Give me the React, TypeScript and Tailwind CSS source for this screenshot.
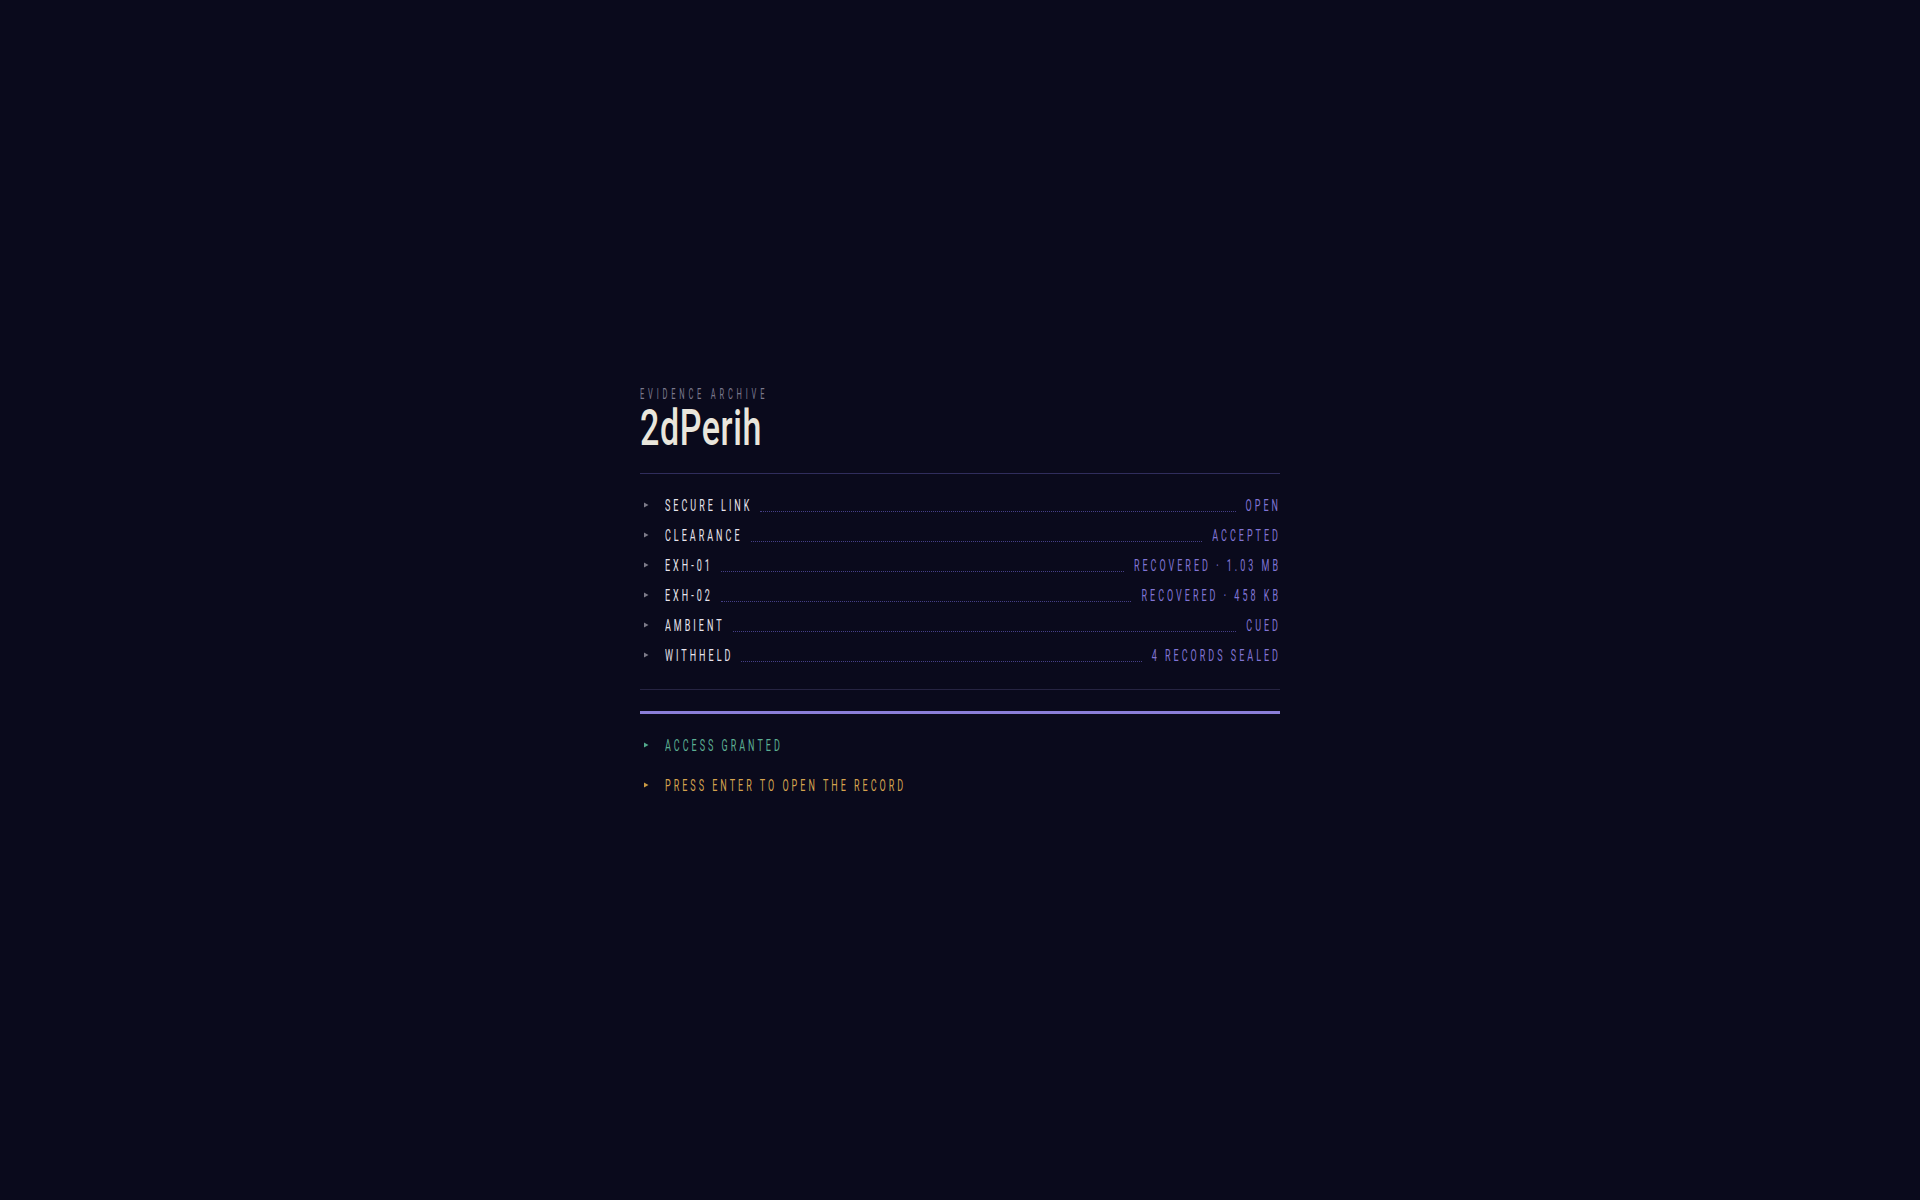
import React from "react";

const rows: [string, string][] = [
  ["SECURE LINK", "OPEN"],
  ["CLEARANCE", "ACCEPTED"],
  ["EXH-01", "RECOVERED · 1.03 MB"],
  ["EXH-02", "RECOVERED · 458 KB"],
  ["AMBIENT", "CUED"],
  ["WITHHELD", "4 RECORDS SEALED"],
];

function Tri({ color }: { color: string }) {
  return (
    <svg width="5" height="6" viewBox="0 0 5 6" className="block">
      <polygon points="0,0.5 4.5,3 0,5.5" fill={color} />
    </svg>
  );
}

export default function App() {
  return (
    <div className="min-h-screen w-full bg-[#0a0a1c] font-['Roboto',sans-serif]">
      <div className="mx-auto w-[640px] pt-[388px]">
        <div className="h-[14px] flex items-center">
          <span className="inline-block scale-y-[1.85] text-[7.5px] leading-[10px] tracking-[3.8px] font-normal text-[#7a788c]">
            EVIDENCE ARCHIVE
          </span>
        </div>
        <div className="mt-[5px] h-[40px] flex items-center">
          <span className="inline-block scale-y-[1.49] text-[34px] leading-[26px] tracking-[0.6px] font-medium text-[#e9e6dc]">
            2dPerih
          </span>
        </div>
        <div className="mt-[26px] h-px bg-[#302d5c]" />
        <div className="mt-[16px] flex flex-col">
          {rows.map(([label, value]) => (
            <div key={label} className="flex h-[30px] items-center">
              <div className="w-[25px] pl-1 flex items-center">
                <Tri color="#7c7a88" />
              </div>
              <span className="inline-block scale-y-[1.9] text-[9px] leading-[12px] tracking-[3px] font-normal text-[#e6e4ec] whitespace-nowrap">
                {label}
              </span>
              <div className="ml-2 mr-[10px] h-[13px] flex-1 border-b border-dotted border-[#453f86]" />
              <span className="-mr-px inline-block scale-y-[1.9] text-[9px] leading-[12px] tracking-[3px] font-normal text-[#8074d4] whitespace-nowrap">
                {value}
              </span>
            </div>
          ))}
        </div>
        <div className="mt-[19px] h-px bg-[#262442]" />
        <div className="mt-[21px] h-[3px] bg-[#8a7ed8]" />
        <div className="mt-[16px] flex h-[30px] items-center">
          <div className="w-[25px] pl-1 flex items-center">
            <Tri color="#52a88b" />
          </div>
          <span className="inline-block scale-y-[1.9] text-[9px] leading-[12px] tracking-[3px] font-normal text-[#5cae92] whitespace-nowrap">
            ACCESS GRANTED
          </span>
        </div>
        <div className="mt-[10px] flex h-[30px] items-center">
          <div className="w-[25px] pl-1 flex items-center">
            <Tri color="#c99a44" />
          </div>
          <span className="inline-block scale-y-[1.9] text-[9px] leading-[12px] tracking-[3px] font-normal text-[#d4a24e] whitespace-nowrap">
            PRESS ENTER TO OPEN THE RECORD
          </span>
        </div>
      </div>
    </div>
  );
}
